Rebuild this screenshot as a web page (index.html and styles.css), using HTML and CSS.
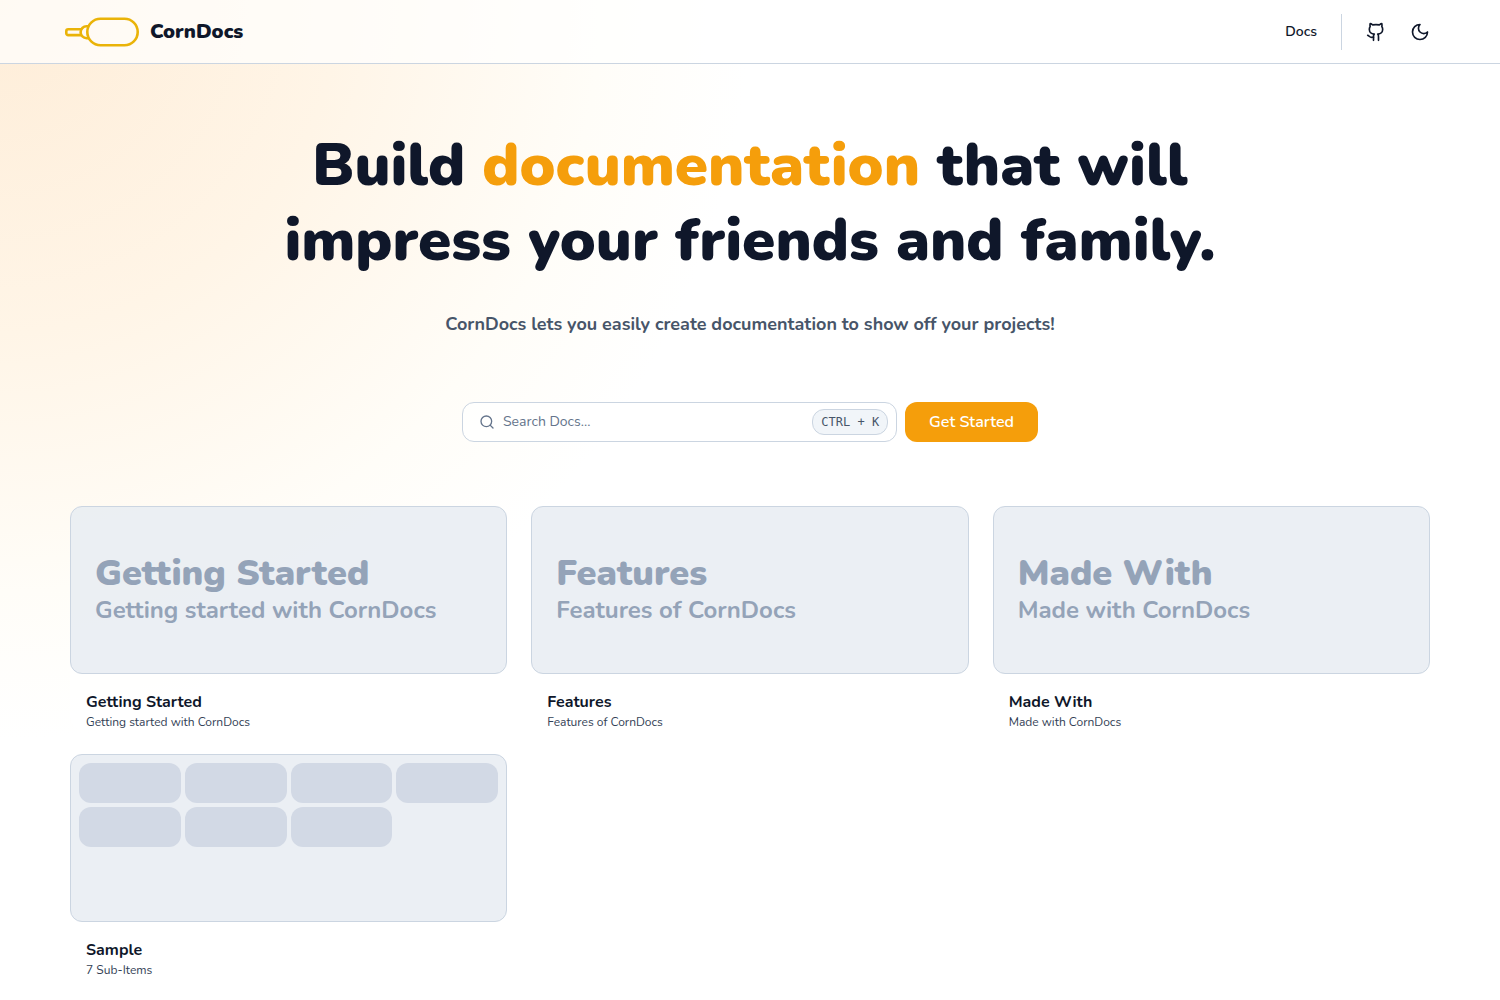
FILE: index.html
```
<!DOCTYPE html>
<html lang="en">
<head>
<meta charset="utf-8">
<meta name="viewport" content="width=device-width, initial-scale=1">
<title>CornDocs</title>
<link rel="stylesheet" href="styles.css">
</head>
<body>
<header class="site-header">
  <div class="container header-inner">
    <a class="brand" href="#">
      <svg class="brand-logo" viewBox="0 0 76 32" fill="none" stroke="#eab308" stroke-width="2.6" aria-hidden="true">
        <rect x="23.3" y="2.8" width="50.4" height="26.4" rx="13.2"/>
        <path d="M24.6 10.2h-2a6 6 0 0 0 0 12h2"/>
        <path d="M17 13.3H4.2a1.9 1.9 0 0 0-1.9 1.9v2a1.9 1.9 0 0 0 1.9 1.9H17"/>
      </svg>
      <span>CornDocs</span>
    </a>
    <nav class="nav">
      <a class="nav-link" href="#docs">Docs</a>
      <span class="divider"></span>
      <a class="icon-button" href="#github" aria-label="GitHub">
        <svg class="icon" viewBox="0 0 24 24"><path d="M15 22v-4a4.8 4.8 0 0 0-1-3.5c3 0 6-2 6-5.5.08-1.25-.27-2.48-1-3.5.28-1.15.28-2.35 0-3.5 0 0-1 0-3 1.5-2.64-.5-5.36-.5-8 0C6 2 5 2 5 2c-.3 1.15-.3 2.35 0 3.5A5.403 5.403 0 0 0 4 9c0 3.5 3 5.5 6 5.5-.39.49-.68 1.05-.85 1.65-.17.6-.22 1.23-.15 1.85v4"/><path d="M9 18c-4.51 2-5-2-7-2"/></svg>
      </a>
      <button class="icon-button" type="button" aria-label="Toggle theme">
        <svg class="icon" viewBox="0 0 24 24"><path d="M12 3a6 6 0 0 0 9 9 9 9 0 1 1-9-9Z"/></svg>
      </button>
    </nav>
  </div>
</header>
<main class="container main">
  <section class="hero">
    <h1 class="hero-title">Build <span class="accent">documentation</span> that will impress your friends and family.</h1>
    <p class="hero-text">CornDocs lets you easily create documentation to show off your projects!</p>
    <div class="actions">
      <label class="search">
        <svg class="icon search-icon" viewBox="0 0 24 24" aria-hidden="true"><circle cx="11" cy="11" r="8"/><path d="m21 21-4.3-4.3"/></svg>
        <input class="search-input" type="text" placeholder="Search Docs..." aria-label="Search Docs">
        <kbd class="shortcut">CTRL + K</kbd>
      </label>
      <button class="primary-button" type="button">Get Started</button>
    </div>
  </section>
  <section class="cards">
    <a class="card" href="#getting-started">
      <div class="preview preview-text"><span class="preview-title">Getting Started</span><span class="preview-subtitle">Getting started with CornDocs</span></div>
      <div class="caption"><h2 class="caption-title">Getting Started</h2><p class="caption-text">Getting started with CornDocs</p></div>
    </a>
    <a class="card" href="#features">
      <div class="preview preview-text"><span class="preview-title">Features</span><span class="preview-subtitle">Features of CornDocs</span></div>
      <div class="caption"><h2 class="caption-title">Features</h2><p class="caption-text">Features of CornDocs</p></div>
    </a>
    <a class="card" href="#made-with">
      <div class="preview preview-text"><span class="preview-title">Made With</span><span class="preview-subtitle">Made with CornDocs</span></div>
      <div class="caption"><h2 class="caption-title">Made With</h2><p class="caption-text">Made with CornDocs</p></div>
    </a>
    <a class="card" href="#sample">
      <div class="preview preview-grid"><span class="tile"></span><span class="tile"></span><span class="tile"></span><span class="tile"></span><span class="tile"></span><span class="tile"></span><span class="tile"></span></div>
      <div class="caption"><h2 class="caption-title">Sample</h2><p class="caption-text">7 Sub-Items</p></div>
    </a>
  </section>
</main>
</body>
</html>
```
FILE: styles.css
```
*, *::before, *::after { box-sizing: border-box; }

body {
  margin: 0;
  min-height: 100vh;
  font-family: Nunito, "Open Sans", sans-serif;
  font-size: 16px;
  line-height: 24px;
  color: #0f172a;
  background: radial-gradient(ellipse 50vw 74vh at 0 0, #feedd8, #fff5e7 45%, #fffdf8 80%, #ffffff) no-repeat #ffffff;
}

h1, h2, p { margin: 0; }
a { color: inherit; text-decoration: none; }
button, input { font: inherit; color: inherit; }

.container {
  width: 100%;
  max-width: 1400px;
  margin: 0 auto;
  padding: 0 20px;
}

.icon {
  display: block;
  width: 20px;
  height: 20px;
  fill: none;
  stroke: currentColor;
  stroke-width: 2;
  stroke-linecap: round;
  stroke-linejoin: round;
}

/* Header */
.site-header {
  border-bottom: 1px solid #cbd5e1;
  background: rgba(255, 255, 255, 0.7);
}
.header-inner {
  display: flex;
  align-items: center;
  justify-content: space-between;
  height: 63px;
}
.brand {
  display: flex;
  align-items: center;
  gap: 10px;
  margin-left: -6px;
  font-size: 20px;
  font-weight: 900;
}
.brand-logo { width: 76px; height: 32px; }
.nav { display: flex; align-items: center; }
.nav-link { font-size: 14px; font-weight: 600; }
.divider {
  width: 1px;
  height: 36px;
  margin: 0 14px 0 24px;
  background: #cbd5e1;
}
.icon-button {
  padding: 10px;
  border: 0;
  background: none;
  cursor: pointer;
}
.icon-button + .icon-button { margin: 0 -10px 0 4px; }

/* Hero */
.main { padding-top: 64px; padding-bottom: 16px; }
.hero {
  display: flex;
  flex-direction: column;
  align-items: center;
  text-align: center;
}
.hero-title {
  max-width: 1024px;
  font-size: 60px;
  line-height: 75px;
  font-weight: 900;
}
.accent { color: #f59e0b; }
.hero-text {
  margin-top: 32px;
  font-size: 18px;
  line-height: 28px;
  font-weight: 700;
  color: #475569;
}
.actions {
  display: flex;
  gap: 8px;
  width: 100%;
  max-width: 576px;
  margin: 64px 0;
}
.search {
  display: flex;
  flex: 1;
  align-items: center;
  height: 40px;
  padding: 0 8px 0 16px;
  border: 1px solid #cbd5e1;
  border-radius: 12px;
  background: rgba(255, 255, 255, 0.7);
  color: #64748b;
}
.search-icon { width: 16px; height: 16px; flex: none; }
.search-input {
  flex: 1;
  min-width: 0;
  margin-left: 8px;
  padding: 0;
  border: 0;
  outline: 0;
  background: none;
  font-size: 14px;
}
.search-input::placeholder { color: #64748b; opacity: 1; }
.shortcut {
  height: 26px;
  padding: 0 8px;
  border: 1px solid #cbd5e1;
  border-radius: 12px;
  background: #f1f5f9;
  font-family: "DejaVu Sans Mono", monospace;
  font-size: 12px;
  line-height: 24px;
  color: #475569;
}
.primary-button {
  height: 40px;
  padding: 0 24px;
  border: 0;
  border-radius: 12px;
  background: #f59e0b;
  font-weight: 600;
  color: #ffffff;
  cursor: pointer;
}

/* Cards */
.cards {
  display: grid;
  grid-template-columns: repeat(3, minmax(0, 1fr));
  gap: 24px;
}
.card {
  display: block;
  border-radius: 12px;
  background: rgba(255, 255, 255, 0.5);
}
.preview {
  height: 168px;
  border: 1px solid #cbd5e1;
  border-radius: 12px;
  background: rgba(226, 232, 240, 0.7);
}
.preview-text {
  display: flex;
  flex-direction: column;
  justify-content: center;
  padding: 0 24px;
  color: #94a3b8;
}
.preview-title { font-size: 36px; line-height: 40px; font-weight: 900; }
.preview-subtitle { font-size: 24px; line-height: 32px; font-weight: 700; }
.preview-grid {
  display: grid;
  grid-template-columns: repeat(4, 1fr);
  grid-auto-rows: 40px;
  gap: 4px;
  padding: 8px;
}
.tile { border-radius: 12px; background: #d2d9e5; }
.caption { padding: 16px 16px 0; }
.caption-title { font-size: 16px; line-height: 24px; font-weight: 700; }
.caption-text { font-size: 12px; line-height: 16px; color: #334155; }
```
